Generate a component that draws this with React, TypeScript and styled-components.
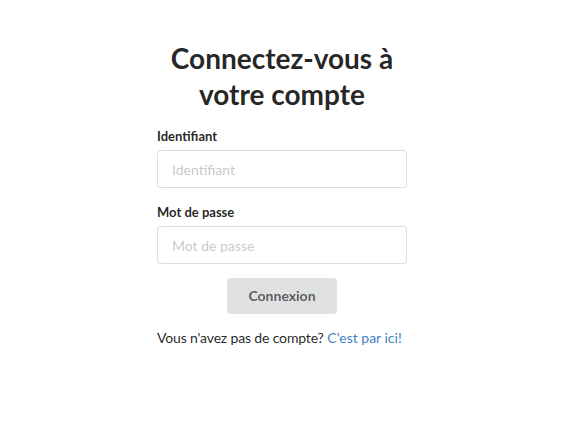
import React from "react";
import styled, { createGlobalStyle } from "styled-components";

const GlobalStyle = createGlobalStyle`
  html, body {
    margin: 0;
    padding: 0;
    background: #ffffff;
  }
  body {
    font-family: Lato, "Helvetica Neue", Arial, Helvetica, sans-serif;
    font-size: 14px;
    line-height: 1.4285em;
    color: rgba(0, 0, 0, 0.87);
  }
  * { box-sizing: border-box; }
`;

const Page = styled.div`
  display: flex;
  justify-content: center;
  padding: 40px 20px 0 0;
`;

const Column = styled.div`
  width: 250px;
  display: flex;
  flex-direction: column;
`;

const Title = styled.h1`
  margin: 0 0 14px;
  font-family: Lato, "Helvetica Neue", Arial, sans-serif;
  font-size: 28px;
  line-height: 1.28571429em;
  font-weight: 700;
  text-align: center;
  color: rgba(0, 0, 0, 0.87);
`;

const Form = styled.form`
  display: flex;
  flex-direction: column;
`;

const Field = styled.div`
  display: flex;
  flex-direction: column;
  margin-bottom: 14px;
`;

const Label = styled.label`
  display: block;
  margin: 0 0 4px;
  font-size: 13px;
  line-height: 20px;
  font-weight: 700;
  color: rgba(0, 0, 0, 0.87);
`;

const Input = styled.input`
  width: 100%;
  margin: 0;
  padding: 9.5px 14px;
  font-family: Lato, "Helvetica Neue", Arial, sans-serif;
  font-size: 14px;
  line-height: 17px;
  height: 38px;
  color: rgba(0, 0, 0, 0.87);
  background: #ffffff;
  border: 1px solid rgba(34, 36, 38, 0.15);
  border-radius: 4px;
  outline: none;
  &::placeholder {
    color: rgba(191, 191, 191, 0.87);
  }
`;

const Button = styled.button`
  align-self: center;
  margin: 0 0 14px;
  padding: 11px 21px;
  font-family: Lato, "Helvetica Neue", Arial, sans-serif;
  font-size: 14px;
  line-height: 14px;
  font-weight: 700;
  color: rgba(0, 0, 0, 0.6);
  background: #e0e1e2;
  border: none;
  border-radius: 4px;
  cursor: pointer;
`;

const Footer = styled.p`
  margin: 0;
  font-size: 14px;
  line-height: 20px;
  color: rgba(0, 0, 0, 0.87);
`;

const Prompt = styled.span`
  letter-spacing: -0.15px;
`;

const Link = styled.a`
  color: #4183c4;
  text-decoration: none;
`;

export default function App() {
  return (
    <>
      <GlobalStyle />
      <Page>
        <Column>
          <Title>Connectez-vous à votre compte</Title>
          <Form onSubmit={(e) => e.preventDefault()}>
            <Field>
              <Label htmlFor="login">Identifiant</Label>
              <Input id="login" type="text" placeholder="Identifiant" />
            </Field>
            <Field>
              <Label htmlFor="password">Mot de passe</Label>
              <Input id="password" type="password" placeholder="Mot de passe" />
            </Field>
            <Button type="submit">Connexion</Button>
          </Form>
          <Footer>
            <Prompt>Vous n'avez pas de compte?</Prompt>{" "}
            <Link href="#">C'est par ici!</Link>
          </Footer>
        </Column>
      </Page>
    </>
  );
}
